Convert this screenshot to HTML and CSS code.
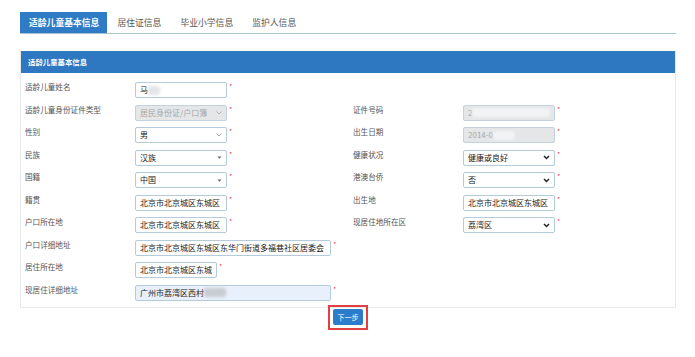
FILE: index.html
```html
<!DOCTYPE html>
<html lang="zh-CN">
<head>
    <meta charset="utf-8" />
    <title>适龄儿童基本信息</title>
    <link rel="stylesheet" href="styles.css">
</head>
<body>
    <div class="container">
        <div class="tabs">
            <div class="tab active">适龄儿童基本信息</div>
            <div class="tab">居住证信息</div>
            <div class="tab">毕业小学信息</div>
            <div class="tab">监护人信息</div>
        </div>

        <div class="panel">
            <div class="panel-head">适龄儿童基本信息</div>
            <div class="form">
                <div class="item">
                    <div class="label">适龄儿童姓名</div>
                    <div class="field">马<span class="blur w12"></span></div>
                    <span class="req">*</span>
                </div>
                <div class="item"></div>

                <div class="item">
                    <div class="label">适龄儿童身份证件类型</div>
                    <div class="field select disabled">居民身份证/户口簿
                        <svg class="arrow" width="6" height="4" viewBox="0 0 6 4"><path d="M0.5 0.5 L3 3 L5.5 0.5" fill="none" stroke="#9aa3ab" stroke-width="0.8"/></svg>
                    </div>
                    <span class="req">*</span>
                </div>
                <div class="item">
                    <div class="label">证件号码</div>
                    <div class="field disabled">2<span class="blur w78"></span></div>
                    <span class="req">*</span>
                </div>

                <div class="item">
                    <div class="label">性别</div>
                    <div class="field select">男
                        <svg class="arrow" width="6" height="4" viewBox="0 0 6 4"><path d="M0.5 0.5 L3 3 L5.5 0.5" fill="none" stroke="#8a949c" stroke-width="0.8"/></svg>
                    </div>
                    <span class="req">*</span>
                </div>
                <div class="item">
                    <div class="label">出生日期</div>
                    <div class="field disabled">2014-0<span class="blur w22"></span></div>
                    <span class="req">*</span>
                </div>

                <div class="item">
                    <div class="label">民族</div>
                    <div class="field select">汉族
                        <svg class="arrow" width="5" height="3" viewBox="0 0 5 3"><path d="M0.5 0.5 L4.5 0.5 L2.5 2.8 Z" fill="#666"/></svg>
                    </div>
                    <span class="req">*</span>
                </div>
                <div class="item">
                    <div class="label">健康状况</div>
                    <div class="field select">健康或良好
                        <svg class="arrow" width="7" height="5" viewBox="0 0 7 5"><path d="M1 1 L3.5 3.6 L6 1" fill="none" stroke="#222" stroke-width="1.4"/></svg>
                    </div>
                    <span class="req">*</span>
                </div>

                <div class="item">
                    <div class="label">国籍</div>
                    <div class="field select">中国
                        <svg class="arrow" width="5" height="3" viewBox="0 0 5 3"><path d="M0.5 0.5 L4.5 0.5 L2.5 2.8 Z" fill="#666"/></svg>
                    </div>
                    <span class="req">*</span>
                </div>
                <div class="item">
                    <div class="label">港澳台侨</div>
                    <div class="field select">否
                        <svg class="arrow" width="7" height="5" viewBox="0 0 7 5"><path d="M1 1 L3.5 3.6 L6 1" fill="none" stroke="#222" stroke-width="1.4"/></svg>
                    </div>
                    <span class="req">*</span>
                </div>

                <div class="item">
                    <div class="label">籍贯</div>
                    <div class="field">北京市北京城区东城区</div>
                    <span class="req">*</span>
                </div>
                <div class="item">
                    <div class="label">出生地</div>
                    <div class="field">北京市北京城区东城区</div>
                    <span class="req">*</span>
                </div>

                <div class="item">
                    <div class="label">户口所在地</div>
                    <div class="field">北京市北京城区东城区</div>
                    <span class="req">*</span>
                </div>
                <div class="item">
                    <div class="label">现居住地所在区</div>
                    <div class="field select">荔湾区
                        <svg class="arrow" width="7" height="5" viewBox="0 0 7 5"><path d="M1 1 L3.5 3.6 L6 1" fill="none" stroke="#222" stroke-width="1.4"/></svg>
                    </div>
                    <span class="req">*</span>
                </div>

                <div class="item wide">
                    <div class="label">户口详细地址</div>
                    <div class="field long">北京市北京城区东城区东华门街道多福巷社区居委会</div>
                    <span class="req">*</span>
                </div>

                <div class="item wide">
                    <div class="label">居住所在地</div>
                    <div class="field short">北京市北京城区东城</div>
                    <span class="req">*</span>
                </div>

                <div class="item wide">
                    <div class="label">现居住详细地址</div>
                    <div class="field long filled">广州市荔湾区西村<span class="blur w22 light"></span></div>
                    <span class="req">*</span>
                </div>
            </div>
        </div>

        <div class="actions">
            <div class="mark">
                <button class="button">下一步</button>
            </div>
        </div>
    </div>
</body>
</html>
```

FILE: styles.css
```css
body {
    margin: 0;
    background: #fff;
    font-family: "Noto Sans CJK SC", "Liberation Sans", sans-serif;
    color: #333;
}
.container {
    margin: 12px 19px 0 20px;
}
.tabs {
    display: flex;
    height: 21px;
    border-bottom: 1px solid #a9c3d6;
}
.tab {
    padding: 0 9px 0 9px;
    font-size: 8.8px;
    line-height: 21px;
    color: #555;
    margin-right: 1px;
}
.tab.active {
    background: #2f7bc5;
    color: #fff;
    font-weight: bold;
    padding: 0 8px 0 9px;
}
.panel {
    margin-top: 17px;
    border: 1px solid #e8ebee;
    border-top: none;
}
.panel-head {
    background: #2d78c1;
    color: #fff;
    font-size: 7.4px;
    font-weight: bold;
    height: 22px;
    line-height: 22px;
    padding-left: 7px;
}
.form {
    display: grid;
    grid-template-columns: 328px 1fr;
    grid-auto-rows: 16px;
    row-gap: 6.5px;
    padding: 9px 4px 6px;
}
.item {
    display: flex;
    align-items: flex-start;
}
.item.wide {
    grid-column: 1 / -1;
}
.label {
    width: 110px;
    flex: none;
    font-size: 7.6px;
    line-height: 10px;
    color: #555;
    white-space: nowrap;
}
.field {
    box-sizing: border-box;
    width: 92px;
    height: 16px;
    border: 1px solid #b4cbdc;
    border-radius: 2px;
    background: #fff;
    padding: 0 4px;
    font-size: 8px;
    line-height: 14px;
    color: #222;
    white-space: nowrap;
    overflow: hidden;
    display: flex;
    align-items: center;
}
.field.long {
    width: 196px;
}
.field.short {
    width: 82px;
}
.field.filled {
    background: #e8f0fb;
}
.field.disabled {
    background: #e4e6e8;
    color: #a8a8a8;
    border-color: #c3d2de;
}
.select {
    justify-content: space-between;
}
.arrow {
    flex: none;
    margin-left: 4px;
}
.blur {
    display: inline-block;
    height: 9px;
    background: #e2e4e6;
    border-radius: 3px;
    filter: blur(1.5px);
}
.disabled .blur {
    background: #f2f3f4;
}
.blur.light {
    background: #c8ccd2;
}
.w12 {
    width: 12px;
}
.w22 {
    width: 22px;
}
.w78 {
    width: 78px;
}
.req {
    color: #e5484d;
    font-size: 7px;
    line-height: 8px;
    margin-left: 2px;
}
.actions {
    display: flex;
    justify-content: center;
}
.mark {
    margin-top: -3px;
    padding: 2.5px 3px;
    border: 2px solid #e0403f;
    display: flex;
}
.button {
    width: 30px;
    height: 16px;
    padding: 0;
    border: none;
    border-radius: 2px;
    background: #2b7ccb;
    color: #fff;
    font-family: "Noto Sans CJK SC", sans-serif;
    font-size: 7.2px;
    line-height: 16px;
}
```
